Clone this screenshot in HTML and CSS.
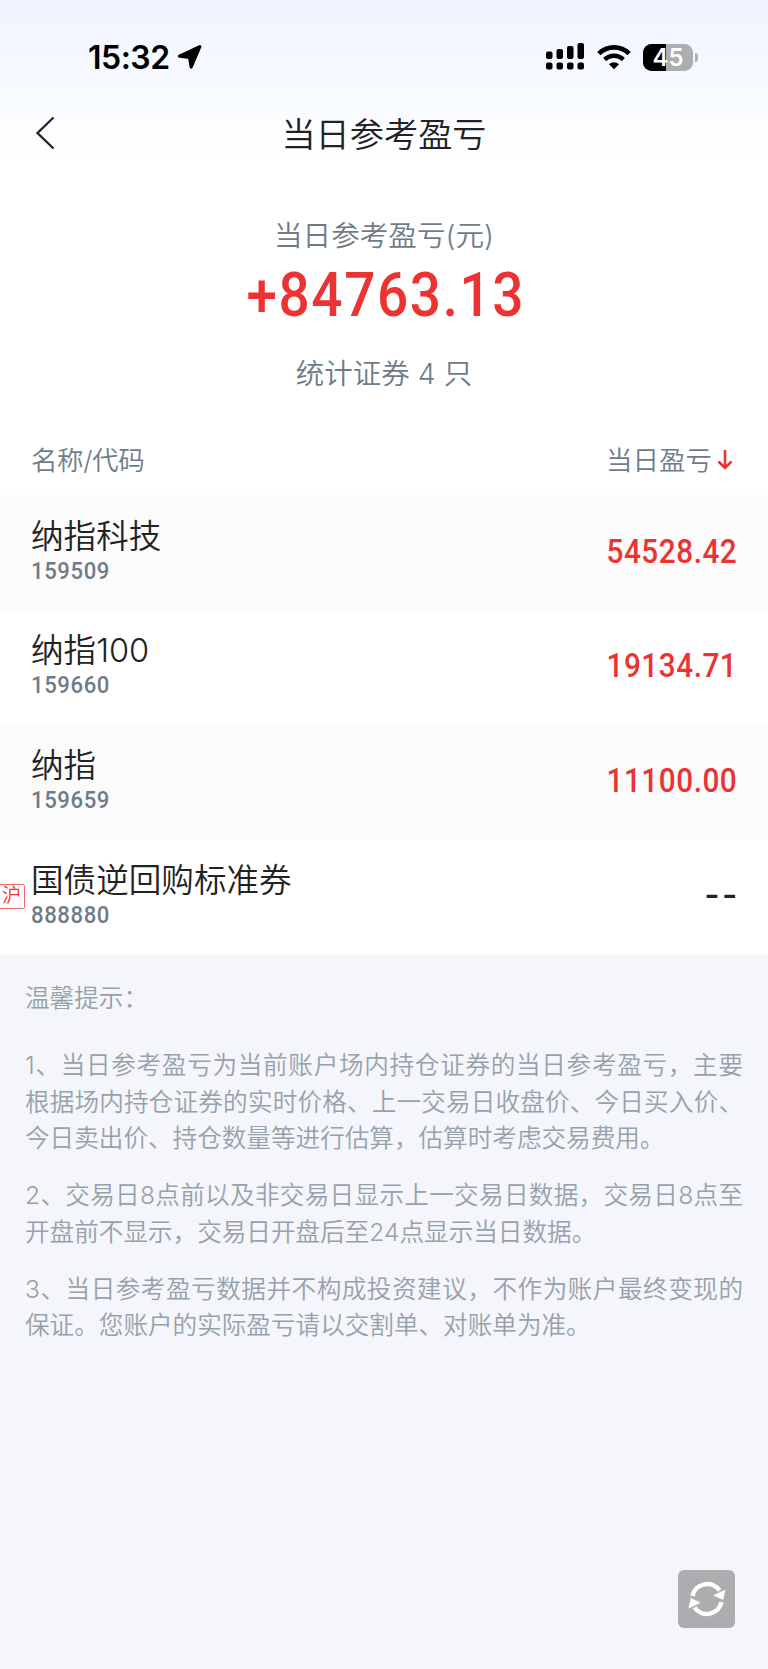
FILE: index.html
```html
<!DOCTYPE html>
<html lang="zh-CN">
<head>
  <meta charset="UTF-8" />
  <meta name="viewport" content="width=device-width, initial-scale=1.0" />
  <title>当日参考盈亏</title>
  <link rel="stylesheet" href="styles.css">
</head>
<body>
  <div class="page">
    <header class="header">
      <div class="status-bar">
        <div class="status-left">
          <span class="time">15:32</span>
          <svg class="location" width="26" height="26" viewBox="0 0 26 26">
            <path d="M2.5 12.2 22.8 2.600 14.200 23l-1.600-9.600z" stroke="#000" stroke-width="3.200" stroke-linejoin="round"/>
          </svg>
        </div>
        <div class="status-right">
          <svg width="38" height="28" viewBox="0 0 38 28">
            <rect x="0" y="8.5" width="6.5" height="7.5" rx="2"/>
            <rect x="10.5" y="6" width="6.5" height="10" rx="2"/>
            <rect x="21" y="3" width="6.5" height="13" rx="2"/>
            <rect x="31.5" y="0" width="6.5" height="16" rx="2"/>
            <rect x="0" y="19.5" width="6.5" height="7" rx="2"/>
            <rect x="10.5" y="19.5" width="6.5" height="7" rx="2"/>
            <rect x="21" y="19.5" width="6.5" height="7" rx="2"/>
            <rect x="31.5" y="19.5" width="6.5" height="7" rx="2"/>
          </svg>
          <svg class="wifi" width="34" height="26" viewBox="0 0 34 26">
            <path d="M1.9 9.6a21.5 21.5 0 0 1 30.2 0" fill="none" stroke="#000" stroke-width="4.8"/>
            <path d="M7.7 15.6a13.2 13.2 0 0 1 18.6 0" fill="none" stroke="#000" stroke-width="4.6"/>
            <path d="M17 25.2l-5-5a7.2 7.2 0 0 1 10 0z"/>
          </svg>
          <div class="battery"><span>45</span></div>
        </div>
      </div>
      <div class="nav">
        <svg class="back" width="20" height="34" viewBox="0 0 20 34">
          <path d="M18.5 1.5 2.5 17l16 15.5" fill="none" stroke="#222" stroke-width="2.3"/>
        </svg>
        <h1>当日参考盈亏</h1>
      </div>
    </header>

    <section class="summary">
      <div class="label">当日参考盈亏(元)</div>
      <div class="amount">+84763.13</div>
      <div class="count">统计证券 4 只</div>
    </section>

    <section class="table">
      <div class="table-head">
        <span class="col-name">名称/代码</span>
        <span class="col-profit">当日盈亏
          <svg width="16" height="22" viewBox="0 0 16 22">
            <path d="M8 2v18M1.5 13.5 8 20l6.5-6.5" fill="none" stroke="#eb3333" stroke-width="2.6"/>
          </svg>
        </span>
      </div>
      <div class="row">
        <div class="stock">
          <div class="name">纳指科技</div>
          <div class="code">159509</div>
        </div>
        <div class="value">54528.42</div>
      </div>
      <div class="row">
        <div class="stock">
          <div class="name">纳指100</div>
          <div class="code">159660</div>
        </div>
        <div class="value">19134.71</div>
      </div>
      <div class="row">
        <div class="stock">
          <div class="name">纳指</div>
          <div class="code">159659</div>
        </div>
        <div class="value">11100.00</div>
      </div>
      <div class="row">
        <span class="tag">沪</span>
        <div class="stock">
          <div class="name">国债逆回购标准券</div>
          <div class="code">888880</div>
        </div>
        <div class="value none">--</div>
      </div>
    </section>

    <section class="tips">
      <p class="tips-title">温馨提示：</p>
      <p>1、当日参考盈亏为当前账户场内持仓证券的当日参考盈亏，主要根据场内持仓证券的实时价格、上一交易日收盘价、今日买入价、今日卖出价、持仓数量等进行估算，估算时考虑交易费用。</p>
      <p>2、交易日8点前以及非交易日显示上一交易日数据，交易日8点至开盘前不显示，交易日开盘后至24点显示当日数据。</p>
      <p>3、当日参考盈亏数据并不构成投资建议，不作为账户最终变现的保证。您账户的实际盈亏请以交割单、对账单为准。</p>
    </section>

    <button class="refresh" aria-label="刷新">
      <svg width="38" height="36" viewBox="0 0 38 36">
        <path d="M4.5 15a15 15 0 0 1 27-5.5" fill="none" stroke="#fff" stroke-width="4.5"/>
        <path d="M37.5 8.5 35.2 19 25.3 14.3z" fill="#fff"/>
        <path d="M33.5 21a15 15 0 0 1-27 5.5" fill="none" stroke="#fff" stroke-width="4.5"/>
        <path d="M.5 27.5 2.8 17 12.7 21.7z" fill="#fff"/>
      </svg>
    </button>
  </div>
</body>
</html>
```
FILE: styles.css
```css
* { box-sizing: border-box; }
body {
  margin: 0;
  font-family: Inter, "Noto Sans CJK SC", sans-serif;
  font-weight: 350;
  background: #f4f6fb;
  color: #222;
}
.page {
  position: relative;
  height: 1669px;
  overflow: hidden;
}
.header {
  height: 166px;
  background: linear-gradient(to bottom, #eef3ff, #f7faff 50%, #fff);
}
.status-bar {
  display: flex;
  align-items: center;
  justify-content: space-between;
  height: 100px;
  padding: 14px 70px 0 88px;
}
.status-left, .status-right {
  display: flex;
  align-items: center;
}
.status-left { gap: 7px; }
.time {
  font-size: 32px;
  font-weight: 600;
  letter-spacing: -0.5px;
  color: #000;
}
.wifi { margin: 0 12px 0 13px; }
.battery {
  position: relative;
  width: 50px;
  height: 27px;
  margin-right: 5px;
  border-radius: 8.5px;
  background: linear-gradient(to right, #000 45%, #acaeb1 45%);
  color: #fff;
  font-size: 24px;
  font-weight: 600;
  line-height: 27px;
  text-align: center;
}
.battery::after {
  content: "";
  position: absolute;
  left: 52px;
  top: 9px;
  width: 3px;
  height: 9px;
  border-radius: 0 4px 4px 0;
  background: #acaeb1;
}
.nav {
  display: flex;
  align-items: center;
  height: 66px;
  padding: 0 35px;
}
.nav h1 {
  flex: 1;
  margin: 0 20px 3px 0;
  font-size: 34.2px;
  font-weight: 350;
  text-align: center;
}
.summary {
  height: 259px;
  padding-top: 51px;
  background: #fff;
  color: #6e7c89;
  text-align: center;
}
.label {
  font-size: 28.6px;
  line-height: 38px;
}
/* narrow digits */
.amount, .code, .value {
  font-family: Roboto, sans-serif;
  font-weight: 500;
  transform: scaleX(0.9);
}
.amount {
  padding-left: 4px;
  font-size: 61px;
  font-weight: 550;
  line-height: 80px;
  letter-spacing: 1.8px;
  color: #eb3333;
}
.count {
  margin-top: 19px;
  font-size: 28.5px;
  line-height: 40px;
}
.table { background: #fff; }
.table-head {
  display: flex;
  align-items: center;
  justify-content: space-between;
  height: 70px;
  padding: 0 35px 3px 31px;
  font-size: 26.5px;
  color: #6e7c89;
}
.col-name { letter-spacing: -0.4px; }
.col-profit {
  display: flex;
  align-items: center;
  gap: 5px;
}
.row {
  position: relative;
  display: flex;
  align-items: center;
  justify-content: space-between;
  height: 114.67px;
  padding: 0 31px 2px 31px;
}
.row:nth-child(even) { background: #fbfbfb; }
.stock { padding-bottom: 1px; }
.name {
  font-size: 32.6px;
  line-height: 40px;
}
.code {
  font-size: 24.5px;
  line-height: 30px;
  letter-spacing: 0.7px;
  color: #6e7c89;
  transform-origin: left;
}
.value {
  font-size: 33px;
  letter-spacing: 0.6px;
  color: #eb3333;
  transform-origin: right;
}
.value.none {
  margin-right: -3px;
  letter-spacing: 3px;
  color: #222;
  transform: scaleX(1.25);
}
.tag {
  position: absolute;
  left: -2px;
  top: 45px;
  width: 27px;
  height: 25px;
  border: 1.5px solid #f26a6a;
  border-radius: 2px;
  font-size: 19px;
  line-height: 22px;
  text-align: center;
  color: #eb3333;
}
.tips {
  padding: 26.5px 25px 0;
  font-size: 24.6px;
  line-height: 36.7px;
  color: #96a1aa;
  text-align: justify;
}
.tips p { margin: 0 0 20.2px; }
.tips .tips-title { margin-bottom: 30px; }
.refresh {
  position: absolute;
  right: 33px;
  top: 1570px;
  display: flex;
  align-items: center;
  justify-content: center;
  width: 57px;
  height: 58px;
  padding: 0;
  border: none;
  border-radius: 6px;
  background: #acadaf;
}
```
